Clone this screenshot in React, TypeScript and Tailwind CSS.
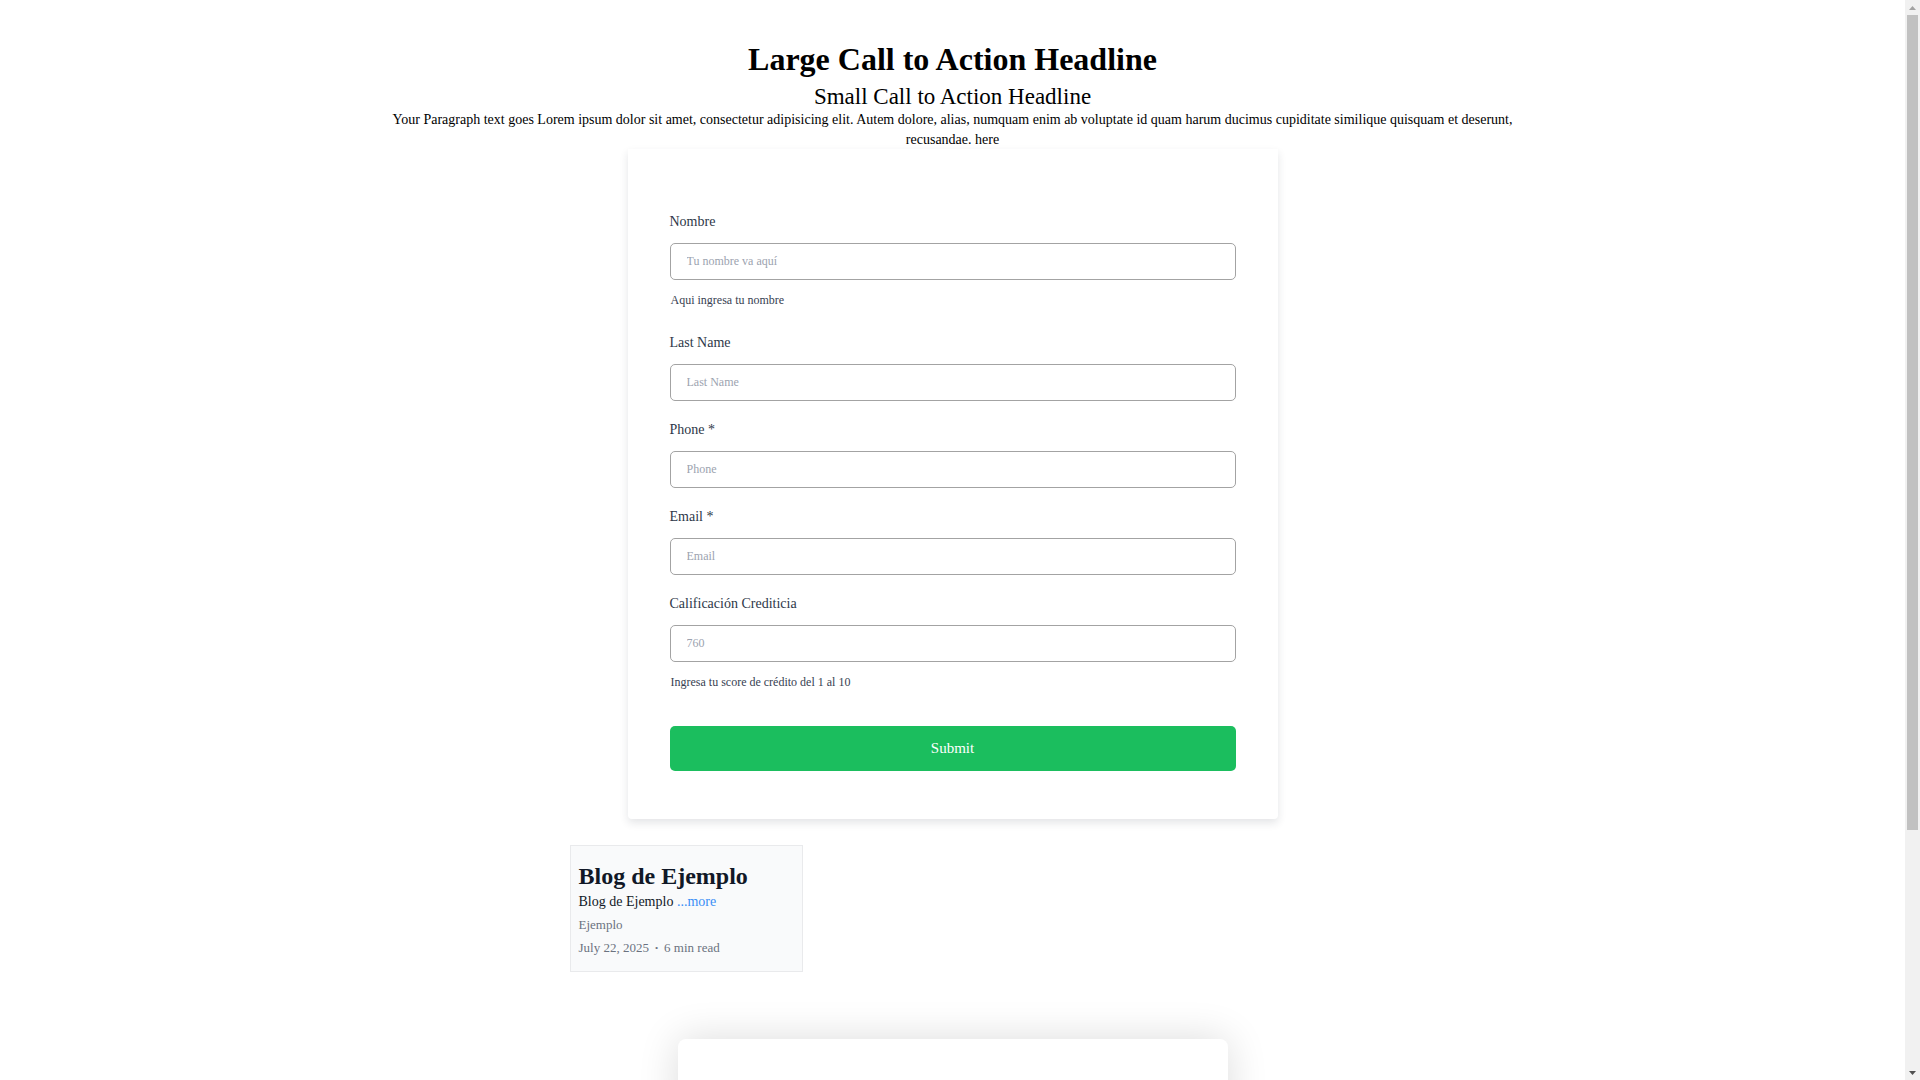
import React from 'react'

const serif = { fontFamily: '"Liberation Serif", "Times New Roman", serif' }

type FieldProps = {
  label: string
  placeholder: string
  helper?: string
}

function Field({ label, placeholder, helper }: FieldProps) {
  return (
    <div className={helper ? 'mb-[28px]' : 'mb-[21px]'}>
      <label className="block h-[16px] text-[14px] leading-[16px] text-[#2d3748]">{label}</label>
      <input
        type="text"
        placeholder={placeholder}
        className="mt-[13px] block h-[37px] w-full rounded-[5px] border border-[#a3a3a3] bg-white px-[16px] text-[12px] text-[#2d3748] outline-none placeholder:text-[#9ca3af]"
        style={serif}
      />
      {helper && (
        <p className="mt-[13px] h-[14px] pl-[1px] text-[12px] leading-[14px] text-[#374151]">{helper}</p>
      )}
    </div>
  )
}

// classic browser scrollbar, as seen on the right edge of the page
function Scrollbar() {
  return (
    <aside className="flex h-screen w-[15px] shrink-0 flex-col bg-[#f1f1f1]">
      <div className="flex h-[15px] items-center justify-center">
        <svg width="7" height="4" viewBox="0 0 7 4">
          <polygon points="3.5,0 7,4 0,4" fill="#a3a3a3" />
        </svg>
      </div>
      <div className="flex-1 px-[2px]">
        <div className="h-[815px] bg-[#c1c1c1]" />
      </div>
      <div className="flex h-[15px] items-center justify-center">
        <svg width="7" height="4" viewBox="0 0 7 4">
          <polygon points="0,0 7,0 3.5,4" fill="#505050" />
        </svg>
      </div>
    </aside>
  )
}

export default function App() {
  return (
    <div className="flex h-screen overflow-hidden bg-white text-black" style={serif}>
      <main className="min-w-0 flex-1 overflow-hidden pb-[60px]">
        {/* Hero */}
        <section className="mx-auto w-[1140px] pt-[41px] text-center">
          <h1 className="text-[32px] font-bold leading-[37px]">Large Call to Action Headline</h1>
          <h2 className="mt-[5px] text-[23px] leading-[27px]">Small Call to Action Headline</h2>
          <p className="text-[14px] leading-[1.4]">
            Your Paragraph text goes Lorem ipsum dolor sit amet, consectetur adipisicing elit. Autem dolore, alias, numquam
            enim ab voluptate id quam harum ducimus cupiditate similique quisquam et deserunt, recusandae. here
          </p>
        </section>

        {/* Form card */}
        <div className="mx-auto w-[650px] rounded-b-[4px] bg-white px-[42px] pt-[65px] pb-[48px] shadow-[0_4px_8px_rgba(30,41,59,0.12)]">
          <form className="flex flex-col">
            <Field label="Nombre" placeholder="Tu nombre va aquí" helper="Aqui ingresa tu nombre" />
            <Field label="Last Name" placeholder="Last Name" />
            <Field label="Phone *" placeholder="Phone" />
            <Field label="Email *" placeholder="Email" />
            <Field label="Calificación Crediticia" placeholder="760" helper="Ingresa tu score de crédito del 1 al 10" />
            <button
              type="button"
              className="mt-[9px] h-[45px] w-full rounded-[5px] bg-[#1bbe5e] text-[15px] text-white"
              style={serif}
            >
              Submit
            </button>
          </form>
        </div>

        {/* Blog */}
        <div className="mx-auto mt-[26px] w-[766px]">
          <div className="w-[233px] border border-[#e9eaec] bg-[#f9fafb] px-[8px] pt-[16px] pb-[15px]">
            <h3 className="text-[24px] font-bold leading-[28px] text-[#111827]">Blog de Ejemplo</h3>
            <p className="mt-[4px] text-[14px] leading-[16px] text-[#111827]">
              Blog de Ejemplo <span className="text-[#3b8ff6]">...more</span>
            </p>
            <p className="mt-[7px] text-[13px] leading-[16px] text-[#6b7280]">Ejemplo</p>
            <div className="mt-[7px] flex items-center gap-[6px] text-[13px] leading-[16px] text-[#6b7280]">
              <span>July 22, 2025</span>
              <span className="text-[9px]">•</span>
              <span>6 min read</span>
            </div>
          </div>
        </div>

        {/* Bottom card */}
        <div className="mx-auto mt-[67px] h-[320px] w-[550px] rounded-[8px] bg-white shadow-[0_0_40px_rgba(0,0,0,0.14)]" />
      </main>
      <Scrollbar />
    </div>
  )
}
